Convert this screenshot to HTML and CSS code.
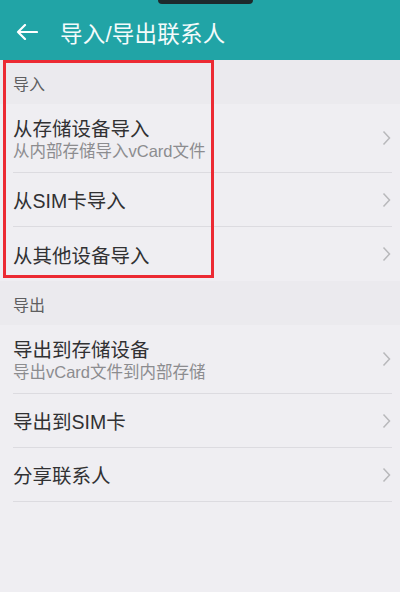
FILE: index.html
```html
<!DOCTYPE html>
<html lang="zh-CN">
<head>
<meta charset="utf-8">
<link rel="stylesheet" href="styles.css">
</head>
<body>
<div class="screen">
  <div class="notch"></div>
  <header class="appbar">
    <svg class="back" width="22" height="16" viewBox="0 0 22 16"><path d="M21 8H2M9 1L2 8l7 7" fill="none" stroke="#fff" stroke-width="2.2" stroke-linecap="round" stroke-linejoin="round"/></svg>
    <h1 class="title">导入/导出联系人</h1>
  </header>
  <main class="list">
    <div class="section">导入</div>
    <div class="item two">
      <div class="texts"><div class="main">从存储设备导入</div><div class="sub">从内部存储导入vCard文件</div></div>
      <svg class="chev" width="9" height="16" viewBox="0 0 9 16"><path d="M1.5 1.5L7.5 8l-6 6.5" fill="none" stroke="#b8b8bb" stroke-width="1.5"/></svg>
    </div>
    <div class="item">
      <div class="texts"><div class="main">从SIM卡导入</div></div>
      <svg class="chev" width="9" height="16" viewBox="0 0 9 16"><path d="M1.5 1.5L7.5 8l-6 6.5" fill="none" stroke="#b8b8bb" stroke-width="1.5"/></svg>
    </div>
    <div class="item last">
      <div class="texts"><div class="main">从其他设备导入</div></div>
      <svg class="chev" width="9" height="16" viewBox="0 0 9 16"><path d="M1.5 1.5L7.5 8l-6 6.5" fill="none" stroke="#b8b8bb" stroke-width="1.5"/></svg>
    </div>
    <div class="section">导出</div>
    <div class="item two">
      <div class="texts"><div class="main">导出到存储设备</div><div class="sub">导出vCard文件到内部存储</div></div>
      <svg class="chev" width="9" height="16" viewBox="0 0 9 16"><path d="M1.5 1.5L7.5 8l-6 6.5" fill="none" stroke="#b8b8bb" stroke-width="1.5"/></svg>
    </div>
    <div class="item">
      <div class="texts"><div class="main">导出到SIM卡</div></div>
      <svg class="chev" width="9" height="16" viewBox="0 0 9 16"><path d="M1.5 1.5L7.5 8l-6 6.5" fill="none" stroke="#b8b8bb" stroke-width="1.5"/></svg>
    </div>
    <div class="item">
      <div class="texts"><div class="main">分享联系人</div></div>
      <svg class="chev" width="9" height="16" viewBox="0 0 9 16"><path d="M1.5 1.5L7.5 8l-6 6.5" fill="none" stroke="#b8b8bb" stroke-width="1.5"/></svg>
    </div>
  </main>
  <div class="highlight"></div>
</div>
</body>
</html>
```
FILE: styles.css
```css
html, body {
  margin: 0;
  padding: 0;
}
body {
  width: 400px;
  height: 592px;
  overflow: hidden;
  background: #efeef2;
  font-family: "Liberation Sans", "Noto Sans CJK SC", sans-serif;
}
.screen {
  position: relative;
  width: 400px;
  height: 592px;
  background: #efeef2;
}
.notch {
  position: absolute;
  left: 158px;
  top: 0;
  width: 95px;
  height: 4px;
  background: #1d2a2c;
  border-radius: 0 0 10px 10px;
}
.appbar {
  height: 60px;
  background: #21a4a6;
  display: flex;
  align-items: center;
  padding-left: 16px;
  box-sizing: border-box;
}
.back {
  margin-top: 3px;
}
.title {
  margin: 0 0 0 22px;
  font-size: 22.5px;
  font-weight: 400;
  color: #f4fbfb;
  line-height: 26px;
  padding-top: 9px;
  letter-spacing: 0.2px;
}
.list {
  display: flex;
  flex-direction: column;
}
.section {
  height: 44px;
  box-sizing: border-box;
  padding: 16px 0 0 13px;
  font-size: 16px;
  line-height: 18px;
  color: #5e5e60;
  background: #ebeaee;
}
.item {
  height: 54px;
  margin: 0 8px 0 13px;
  border-bottom: 1px solid #dcdbe0;
  display: flex;
  align-items: center;
  justify-content: space-between;
  box-sizing: border-box;
}
.item .texts {
  padding-top: 3px;
}
.item.two {
  height: 69px;
  align-items: flex-start;
}
.item.two .texts {
  padding-top: 14px;
}
.item.two .chev {
  align-self: center;
}
.item.last {
  border-bottom: none;
}
.main {
  font-size: 19.5px;
  line-height: 22px;
  color: #313133;
}
.sub {
  font-size: 16.5px;
  line-height: 20px;
  margin-top: 1px;
  color: #8c8c8f;
}
.chev {
  margin-right: 1px;
}
.highlight {
  position: absolute;
  left: 3px;
  top: 60px;
  width: 211px;
  height: 218px;
  box-sizing: border-box;
  border: 3px solid #ec2a33;
}
```
